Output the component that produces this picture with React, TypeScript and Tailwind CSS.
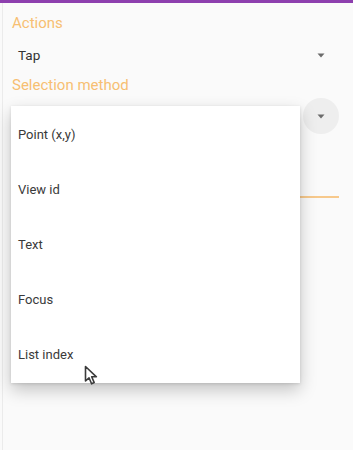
const methods = ["Point (x,y)", "View id", "Text", "Focus", "List index"];

function Caret() {
    return (
        <svg width="8" height="5" viewBox="0 0 8 5" className="relative block">
            <path d="M0.5 0.5 L7.5 0.5 L4 4.5 Z" fill="#6b6b6b" />
        </svg>
    );
}

function Cursor() {
    return (
        <svg width="16" height="22" viewBox="0 0 16 22" className="block">
            <path
                d="M1.5 1.5 L1.5 16 L5 12.8 L7.6 18.8 L10.2 17.6 L7.7 11.8 L12.4 11.8 Z"
                fill="#ffffff"
                stroke="#3b3b3b"
                strokeWidth="1.6"
                strokeLinejoin="round"
            />
        </svg>
    );
}

export default function App() {
    return (
        <div
            className="relative h-[450px] w-full overflow-hidden bg-[#fafafa]"
            style={{ fontFamily: "Roboto, 'Liberation Sans', sans-serif" }}
        >
            <div className="h-[3px] bg-[#8d3fae]" />
            <div className="flex h-[447px]">
                <div className="ml-[2px] w-px bg-[#ebebeb]" />
                <div className="flex-1 pl-[9px] pr-[14px]">
                    {/* Actions field */}
                    <div className="mt-[11px] text-[15px] leading-[18px] text-[#f7bf72]">Actions</div>
                    <div className="mt-[12px] flex h-[22px] items-center justify-between pl-[6px] pr-[14px]">
                        <span className="text-[13.5px] text-[#333333]">Tap</span>
                        <Caret />
                    </div>

                    {/* Selection method field */}
                    <div className="mt-[10px] text-[15px] leading-[18px] text-[#f7bf72]">Selection method</div>
                    <div className="mt-[11px] flex h-[22px] items-center justify-between pl-[6px] pr-[14px]">
                        <span className="text-[13.5px] text-[#333333]">Point (x,y)</span>
                        <div className="relative flex items-center justify-center">
                            {/* ripple */}
                            <div className="absolute left-1/2 top-1/2 h-[36px] w-[36px] -translate-x-1/2 -translate-y-1/2 rounded-full bg-[#eeeeee]" />
                            <Caret />
                        </div>
                    </div>

                    {/* next text field underline */}
                    <div className="mt-[69px] h-[2px] bg-[#f7c98c]" />
                </div>
            </div>

            {/* open dropdown menu */}
            <div className="absolute left-[11px] top-[106px] w-[289px] bg-white py-[1px] shadow-[0_7px_16px_rgba(0,0,0,0.22),0_1px_3px_rgba(0,0,0,0.12)]">
                {methods.map((m) => (
                    <div key={m} className="flex h-[55px] items-center pl-[7px] text-[13px] text-[#3a3a3a]">
                        {m}
                    </div>
                ))}
            </div>

            <div className="absolute left-[84px] top-[365px]">
                <Cursor />
            </div>
        </div>
    );
}
